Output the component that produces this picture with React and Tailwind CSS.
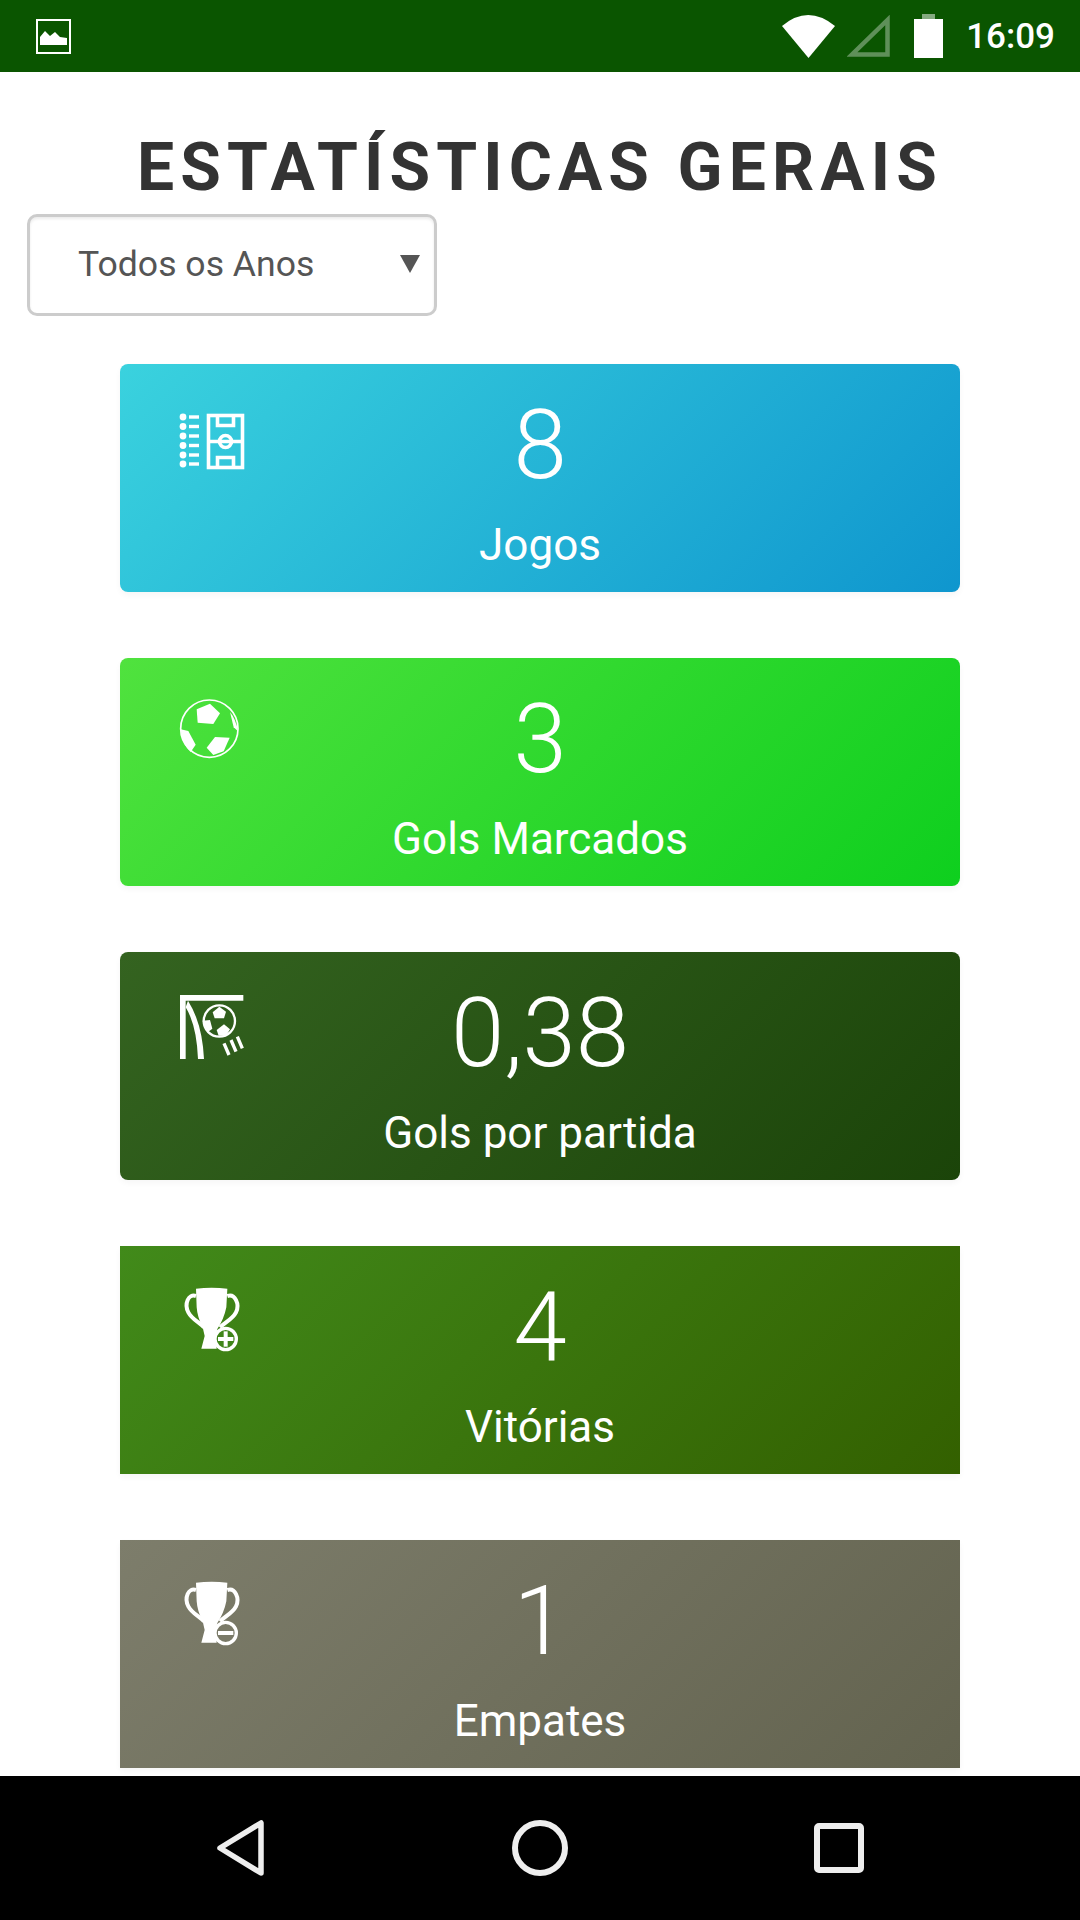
/**
 * Estatisticas - general stats screen with status bar and android nav
 */

function PitchIcon() {
  return (
    <svg viewBox="0 0 110 90" className="w-[110px] h-[90px]" fill="none" stroke="white">
      <rect x="48.5" y="23.5" width="34" height="52" strokeWidth="3.6" />
      <path d="M48 49.5H83M57.5 24V33.5H73.5V24M57.5 75V65.5H73.5V75" strokeWidth="3.6" />
      <circle cx="65.5" cy="49.5" r="6" strokeWidth="3.6" />
      {[25, 34.5, 44, 53.5, 63, 72].map((y) => (
        <g key={y}>
          <circle cx="23" cy={y} r="3.4" fill="white" stroke="none" />
          <rect x="29" y={y - 1.7} width="10" height="3.4" fill="white" stroke="none" />
        </g>
      ))}
    </svg>
  );
}

function BallIcon() {
  return (
    <svg viewBox="0 0 330 270" className="w-[110px] h-[90px]" fill="white">
      <circle cx="148" cy="128" r="86" fill="none" stroke="white" strokeWidth="5" />
      <path d="M110 70L150 53L180 82L160 114L113 110Z" />
      <path d="M62 130L85 135L107 176L92 198Q66 175 62 130Z" />
      <path d="M165 153L209 155L191 196L160 207L140 185Z" />
      <path d="M210 78Q228 100 234 136L221 124Z" />
    </svg>
  );
}

function GoalIcon() {
  return (
    <svg viewBox="0 0 330 270" className="w-[110px] h-[90px]" fill="white">
      <path d="M60 45H250V62H77V237H60Z" />
      <path d="M84 62Q127 130 132 237H114Q110 135 77 82Z" />
      <circle cx="178" cy="123" r="47" fill="none" stroke="white" strokeWidth="7" />
      <path d="M158 97L178 80L198 95L192 115H164Z" />
      <path d="M170 150L192 133L210 148L198 167L176 167Z" />
      <path d="M128 122L150 120L157 146L145 155Q130 145 128 122Z" />
      <path d="M192 190L207 225M213 180L228 215M232 170L247 205" stroke="white" strokeWidth="10" fill="none" />
    </svg>
  );
}

function TrophyIcon({ bg, plus }) {
  return (
    <svg viewBox="0 0 330 270" className="w-[110px] h-[90px]" fill="white">
      <path d="M108 44Q155 38 202 44L199 100Q192 135 172 165L166 190L170 224H124L134 186L128 160Q112 130 110 100Z" />
      <path d="M108 66C85 58 72 90 85 115C95 135 118 145 132 160" fill="none" stroke="white" strokeWidth="12" />
      <path d="M202 66C225 58 240 90 228 115C218 135 195 145 180 160" fill="none" stroke="white" strokeWidth="12" />
      <circle cx="197" cy="195" r="32" fill={bg} stroke="white" strokeWidth="10" />
      <rect x="174" y="189" width="46" height="12" />
      {plus && <rect x="191" y="172" width="12" height="46" />}
    </svg>
  );
}

const CARDS = [
  {
    value: '8',
    label: 'Jogos',
    gradient: 'rounded-[8px] bg-[linear-gradient(135deg,#3ad2de,#0f96ce)]',
    icon: <PitchIcon />,
  },
  {
    value: '3',
    label: 'Gols Marcados',
    gradient: 'rounded-[8px] bg-[linear-gradient(135deg,#50e23e,#0ecf1e)]',
    icon: <BallIcon />,
  },
  {
    value: '0,38',
    label: 'Gols por partida',
    gradient: 'rounded-[8px] bg-[linear-gradient(135deg,#346320,#1b4409)]',
    icon: <GoalIcon />,
  },
  {
    value: '4',
    label: 'Vitórias',
    gradient: 'bg-[linear-gradient(135deg,#418a1a,#336000)]',
    icon: <TrophyIcon bg="#3f8519" plus />,
  },
  {
    value: '1',
    label: 'Empates',
    gradient: 'bg-[linear-gradient(135deg,#7d7d6b,#63634f)]',
    icon: <TrophyIcon bg="#7a7a68" />,
  },
];

function StatCard({ card }) {
  return (
    <div className={`relative h-[228px] shrink-0 text-white text-center pt-[25px] shadow-[0_3px_6px_rgba(0,0,0,0.04)] ${card.gradient}`}>
      <div className="absolute left-[40px] top-[28px]">{card.icon}</div>
      <div className="text-[96px] leading-[112px] font-light">{card.value}</div>
      <div className="mt-[16px] text-[44px] leading-[56px]">{card.label}</div>
    </div>
  );
}

function StatusBar() {
  return (
    <div className="h-[72px] shrink-0 bg-[#0a5500] flex items-center pl-[36px] pr-[25px]">
      <svg viewBox="0 0 35 35" className="w-[35px] h-[35px]" fill="white">
        <rect x="1" y="1" width="33" height="33" fill="none" stroke="white" strokeWidth="2" />
        <path d="M4 26V18L9 12L14 17L19 13L24 18L31 19V26Z" />
      </svg>
      <div className="flex-1" />
      <svg viewBox="0 0 53 43" className="w-[53px] h-[43px]" fill="white">
        <path d="M0 11Q26 -11 53 11L26.5 43Z" />
      </svg>
      <svg viewBox="0 0 43 42" className="w-[43px] h-[42px] ml-[12px]" fill="none" stroke="white" strokeOpacity="0.35" strokeWidth="4.5">
        <path d="M40.5 5V39.5H5Z" />
      </svg>
      <svg viewBox="0 0 29 44" className="w-[29px] h-[44px] ml-[24px]" fill="white">
        <path d="M8 0H21V5H8Z" fillOpacity="0.5" />
        <path d="M0 5H29V44H0Z" />
      </svg>
      <span className="ml-[23px] text-white text-[35px] leading-none font-medium">16:09</span>
    </div>
  );
}

function NavBar() {
  return (
    <div className="h-[144px] shrink-0 bg-black flex items-start text-[#eeeeee]">
      <svg viewBox="0 0 47 56" className="w-[47px] h-[56px] ml-[217px] mt-[44px]" fill="none" stroke="#eeeeee" strokeWidth="5.5" strokeLinejoin="round">
        <path d="M44 3V53L3 28Z" />
      </svg>
      <svg viewBox="0 0 56 56" className="w-[56px] h-[56px] ml-[248px] mt-[44px]" fill="none" stroke="#eeeeee" strokeWidth="6">
        <circle cx="28" cy="28" r="25" />
      </svg>
      <svg viewBox="0 0 50 50" className="w-[50px] h-[50px] ml-[246px] mt-[47px]" fill="none" stroke="#eeeeee" strokeWidth="6" strokeLinejoin="round">
        <rect x="3" y="3" width="44" height="44" rx="2" />
      </svg>
    </div>
  );
}

export default function App() {
  return (
    <div className="w-[1080px] h-[1920px] flex flex-col bg-white font-['Roboto',sans-serif] overflow-hidden">
      <StatusBar />
      <main className="flex-1 min-h-0 overflow-hidden">
        <h1 className="h-[142px] pt-[46px] text-center text-[#333333] text-[66px] leading-[100px] font-bold tracking-[6.1px]">
          ESTATÍSTICAS GERAIS
        </h1>
        {/* Year filter */}
        <div className="ml-[27px] w-[410px] h-[102px] rounded-[10px] border-[3px] border-[#cccccc] shadow-[inset_0_2px_3px_rgba(0,0,0,0.08)] flex items-center pl-[48px] pr-[14px]">
          <span className="flex-1 text-[35.6px] text-[#555555] leading-none">Todos os Anos</span>
          <svg viewBox="0 0 20 18" className="w-[20px] h-[18px] mb-[2px]" fill="#555555">
            <path d="M0 0H20L10 18Z" />
          </svg>
        </div>
        <div className="mt-[48px] mx-[120px] flex flex-col gap-[66px]">
          {CARDS.map((card) => (
            <StatCard key={card.label} card={card} />
          ))}
        </div>
      </main>
      <NavBar />
    </div>
  );
}
